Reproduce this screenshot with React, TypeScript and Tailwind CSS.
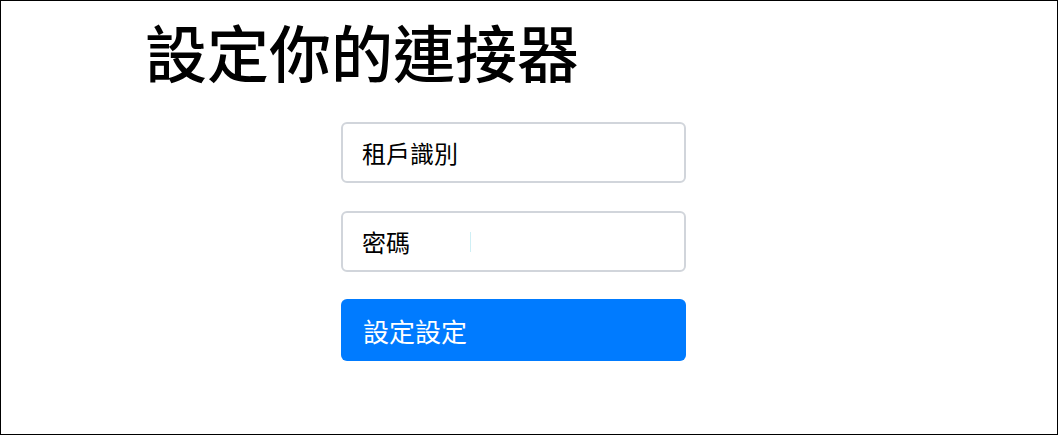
export default function App() {
  return (
    <div
      className="w-[1058px] h-[435px] border border-black bg-white overflow-hidden"
      style={{ fontFamily: '"Noto Sans CJK TC", "Noto Sans", sans-serif' }}
    >
      <h1 className="ml-[144px] mt-[19px] text-[62px] leading-none font-medium text-black">
        設定你的連接器
      </h1>

      <form className="ml-[340px] mt-[40px] w-[345px] flex flex-col gap-[28px]">
        <div className="h-[61px] rounded-md border-2 border-[#d1d5db] flex items-center px-[19px] text-[24px] text-black">
          租戶識別
        </div>
        <div className="h-[61px] rounded-md border-2 border-[#d1d5db] flex items-center px-[19px] text-[24px] text-black">
          密碼
          <span className="ml-[60px] w-px h-[20px] bg-[#cfeff5]" />
        </div>
        <button
          type="button"
          className="-mt-[1px] h-[62px] rounded-md bg-[#007bff] text-white text-[26px] text-left px-[22px]"
        >
          設定設定
        </button>
      </form>
    </div>
  )
}
